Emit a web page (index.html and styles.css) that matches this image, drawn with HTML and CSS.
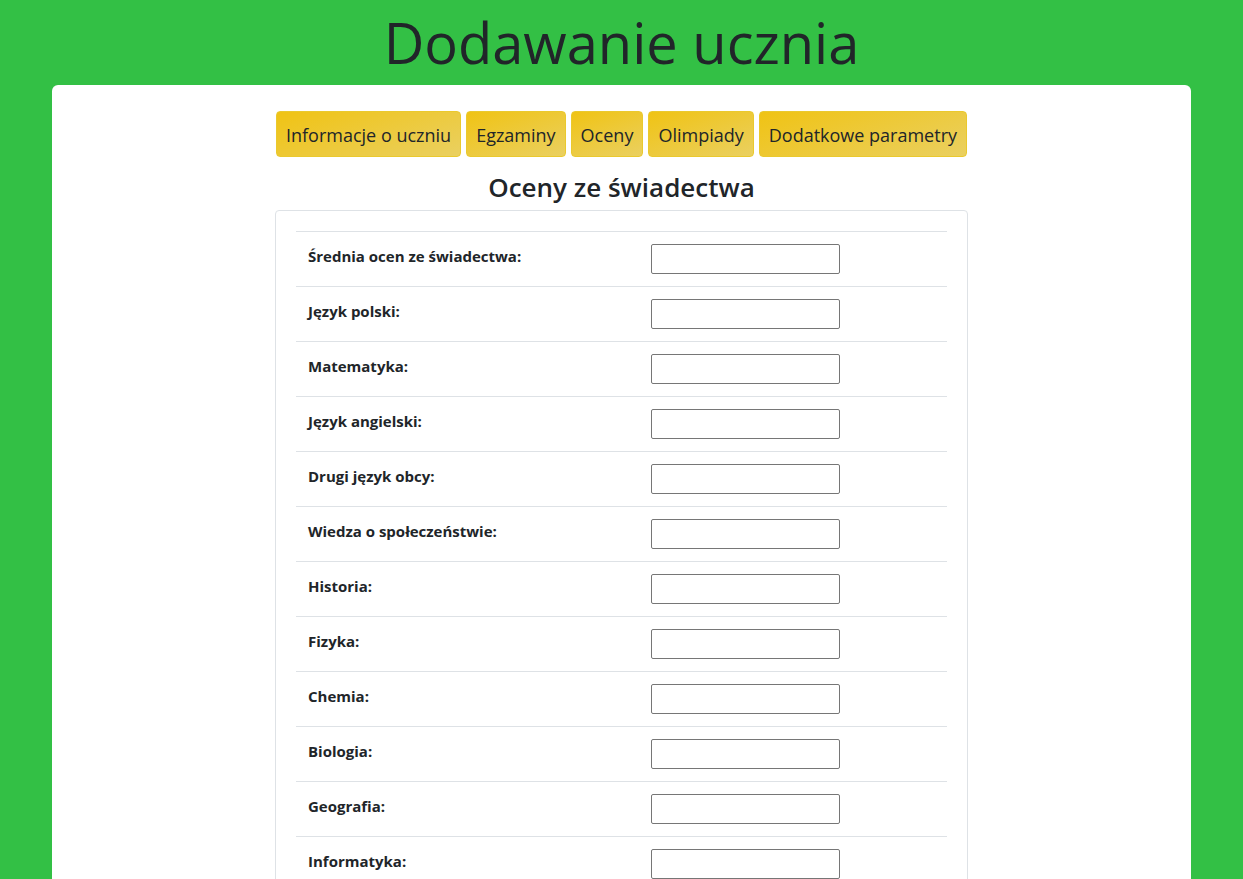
FILE: index.html
```html
<!DOCTYPE html>
<html lang="pl">
<head>
<meta charset="utf-8">
<title>Dodawanie ucznia</title>
<link rel="stylesheet" href="styles.css">
</head>
<body>
<h1 class="page-title">Dodawanie ucznia</h1>
<main class="sheet">
  <div class="content">
    <nav class="tabs">
      <button class="tab">Informacje o uczniu</button>
      <button class="tab">Egzaminy</button>
      <button class="tab">Oceny</button>
      <button class="tab">Olimpiady</button>
      <button class="tab">Dodatkowe parametry</button>
    </nav>
    <h2 class="section-title">Oceny ze świadectwa</h2>
    <div class="card">
      <table class="grades">
        <tbody>
          <tr><th>Średnia ocen ze świadectwa:</th><td><input type="text"></td></tr>
          <tr><th>Język polski:</th><td><input type="text"></td></tr>
          <tr><th>Matematyka:</th><td><input type="text"></td></tr>
          <tr><th>Język angielski:</th><td><input type="text"></td></tr>
          <tr><th>Drugi język obcy:</th><td><input type="text"></td></tr>
          <tr><th>Wiedza o społeczeństwie:</th><td><input type="text"></td></tr>
          <tr><th>Historia:</th><td><input type="text"></td></tr>
          <tr><th>Fizyka:</th><td><input type="text"></td></tr>
          <tr><th>Chemia:</th><td><input type="text"></td></tr>
          <tr><th>Biologia:</th><td><input type="text"></td></tr>
          <tr><th>Geografia:</th><td><input type="text"></td></tr>
          <tr><th>Informatyka:</th><td><input type="text"></td></tr>
        </tbody>
      </table>
    </div>
  </div>
</main>
</body>
</html>
```
FILE: styles.css
```css
html, body {
  margin: 0;
  padding: 0;
}
body {
  background: #33c045;
  font-family: "Open Sans", "Noto Sans", sans-serif;
  color: #212529;
}
.page-title {
  margin: 0;
  text-align: center;
  font-size: 56px;
  font-weight: 400;
  line-height: 84px;
  height: 85px;
  color: #212529;
}
.sheet {
  margin: 0 52px;
  background: #fff;
  border-radius: 6px 6px 0 0;
  padding-top: 26px;
  min-height: 800px;
}
.content {
  width: 693px;
  margin: 0 auto;
}
.tabs {
  display: flex;
  justify-content: center;
  gap: 5px;
}
.tab {
  font-family: inherit;
  font-size: 18px;
  color: #212529;
  height: 46px;
  padding: 1px 9px 0;
  border: 1px solid #eac92e;
  border-radius: 4px;
  background: linear-gradient(160deg, #f0c314 0%, #ead060 100%);
  cursor: pointer;
}
.section-title {
  margin: 14px 0 6px;
  text-align: center;
  font-size: 26px;
  font-weight: 600;
  line-height: 33px;
}
.card {
  border: 1px solid #dee2e6;
  border-radius: 4px;
  padding: 20px 20px 0;
}
.grades {
  width: 100%;
  border-collapse: collapse;
}
.grades tr {
  border-top: 1px solid #dee2e6;
}
.grades th {
  width: 319px;
  text-align: left;
  vertical-align: top;
  padding: 12px 12px;
  font-size: 15px;
  font-weight: 700;
  line-height: 24px;
}
.grades td {
  padding: 12px 12px;
  vertical-align: top;
}
.grades input {
  display: block;
  box-sizing: border-box;
  width: 189px;
  height: 30px;
  margin: 0;
  border: 1px solid #767676;
  border-radius: 2px;
  padding: 1px 4px;
  font-family: inherit;
  font-size: 14px;
}
```
